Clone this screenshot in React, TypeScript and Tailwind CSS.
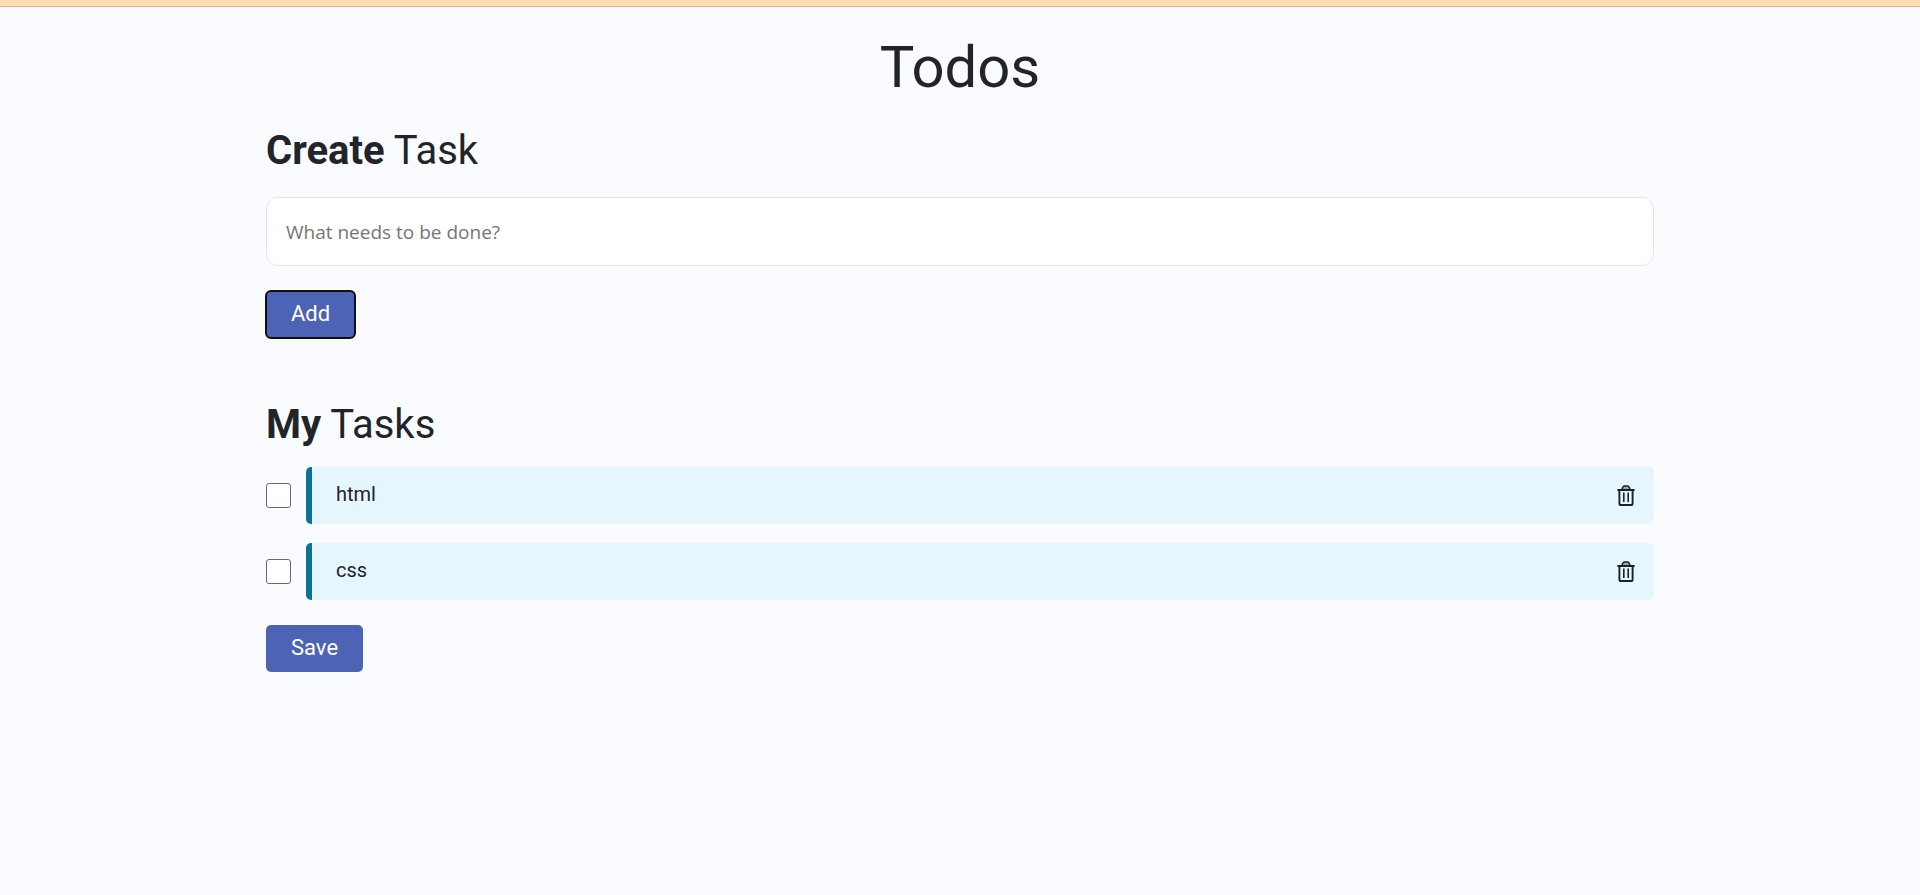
import { useState } from "react";

function TrashIcon() {
  return (
    <svg width="18" height="21" viewBox="0 0 18 21" fill="none" stroke="#1c2126" aria-hidden="true">
      <path d="M4.7 4.5L5.8 2.2Q6.3 1.1 7.4 1.1H10.6Q11.7 1.1 12.2 2.2L13.3 4.5" fill="#9aa5ad" strokeWidth="1.5" />
      <path d="M0.4 5H17.6" strokeWidth="2" />
      <path d="M2.4 5V18.4Q2.4 20 4 20H14Q15.6 20 15.6 18.4V5" strokeWidth="1.9" />
      <path d="M6.8 7.5V17M11.2 7.5V17" strokeWidth="1.6" />
    </svg>
  );
}

const initialTasks = [
  { id: 1, text: "html", done: false },
  { id: 2, text: "css", done: false },
];

export default function App() {
  const [tasks, setTasks] = useState(initialTasks);
  const [draft, setDraft] = useState("");

  const addTask = () => {
    if (!draft.trim()) return;
    setTasks([...tasks, { id: Date.now(), text: draft.trim(), done: false }]);
    setDraft("");
  };

  return (
    <div className="min-h-screen bg-[#fafbff] font-['Roboto',sans-serif] text-[#212529]">
      <div className="h-[7px] border-b border-[#cfb791] bg-[#ffdeb3]" />
      <main className="mx-auto w-full max-w-[1436px] px-6 pt-6">
        <h1 className="text-center text-[58px] leading-[72px]">Todos</h1>

        <section className="mt-6">
          <h2 className="text-[40px] leading-[48px]">
            <label htmlFor="new-task">
              <b className="font-bold">Create</b> Task
            </label>
          </h2>
          <input
            id="new-task"
            type="text"
            value={draft}
            onChange={(e) => setDraft(e.target.value)}
            placeholder="What needs to be done?"
            className="mt-[22px] block h-[69px] w-full rounded-xl border border-[#e2e5ea] bg-white px-[19px] font-['Open_Sans','Noto_Sans',sans-serif] text-[19px] outline-none placeholder:text-[#757575]"
          />
          <button
            type="button"
            onClick={addTask}
            className="mt-[25px] h-[47px] rounded-[5px] bg-[#4d63b6] px-[25px] pb-[3px] text-[22px] text-white outline-2 -outline-offset-1 outline-[#101010]"
          >
            Add
          </button>
        </section>

        <section className="mt-[63px]">
          <h2 className="text-[40px] leading-[48px]">
            <b className="font-bold">My</b> Tasks
          </h2>
          <ul className="mt-[18px] flex flex-col gap-[19px]">
            {tasks.map((task) => (
              <li key={task.id} className="flex items-center gap-[15px]">
                <input
                  id={`task-${task.id}`}
                  type="checkbox"
                  checked={task.done}
                  onChange={() =>
                    setTasks(tasks.map((t) => (t.id === task.id ? { ...t, done: !t.done } : t)))
                  }
                  className="size-[25px] shrink-0 appearance-none rounded-[3px] border border-[#6b6b6b] bg-white checked:bg-[#4d63b6]"
                />
                <div className="flex h-[57px] grow items-center justify-between rounded-[5px] border-l-6 border-[#087394] bg-[#e5f6fe] pr-[19px] pl-6">
                  <label htmlFor={`task-${task.id}`} className="pb-1 text-[20px] leading-[24px]">
                    {task.text}
                  </label>
                  <button
                    type="button"
                    aria-label={`Delete ${task.text}`}
                    onClick={() => setTasks(tasks.filter((t) => t.id !== task.id))}
                    className="pb-px"
                  >
                    <TrashIcon />
                  </button>
                </div>
              </li>
            ))}
          </ul>
          <button
            type="button"
            className="mt-[25px] h-[47px] rounded-[5px] bg-[#4d63b6] px-[25px] pb-[3px] text-[22px] text-white"
          >
            Save
          </button>
        </section>
      </main>
    </div>
  );
}
